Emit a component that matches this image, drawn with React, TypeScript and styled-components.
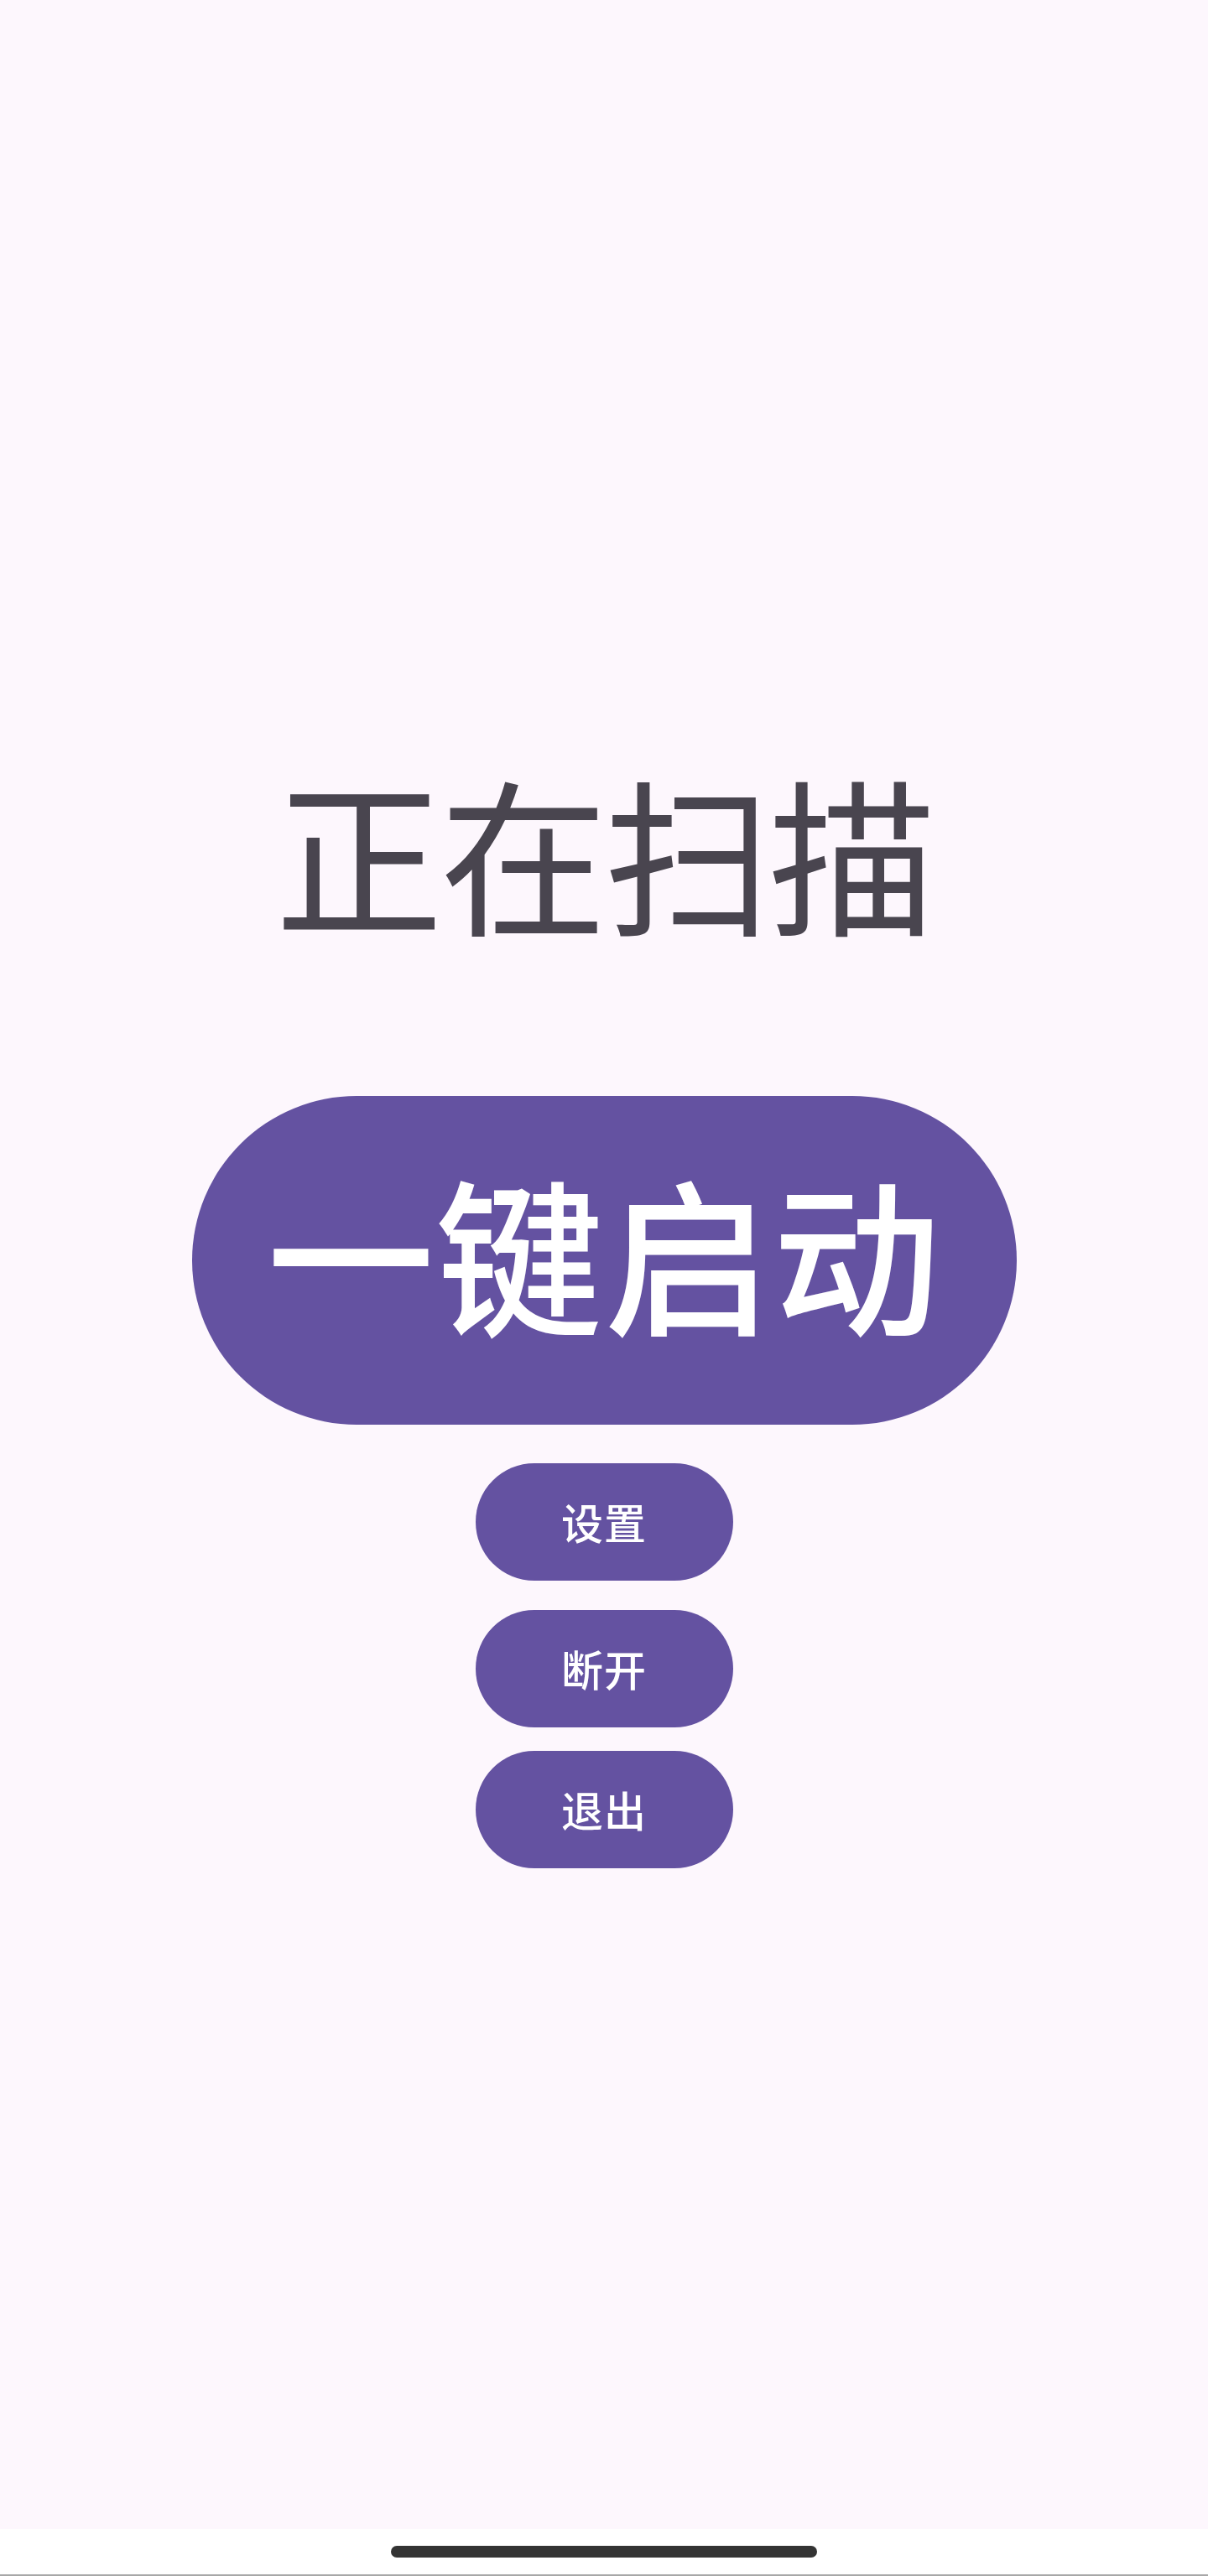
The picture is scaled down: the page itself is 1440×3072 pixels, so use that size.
import React from "react";
import styled, { createGlobalStyle } from "styled-components";

const GlobalStyle = createGlobalStyle`
  html, body {
    margin: 0;
    padding: 0;
    background: #ffffff;
  }
  body {
    font-family: "Noto Sans CJK SC", "Noto Sans", Roboto, sans-serif;
  }
`;

const Screen = styled.div`
  width: 1440px;
  height: 3072px;
  display: flex;
  flex-direction: column;
`;

const Main = styled.main`
  flex: 1;
  background: #fdf7fd;
  display: flex;
  flex-direction: column;
  align-items: center;
  padding-top: 914px;
  box-sizing: border-box;
`;

const Title = styled.h1`
  margin: 0 0 193px;
  font-size: 200px;
  line-height: 1;
  font-weight: 400;
  color: #49454f;
  letter-spacing: -4px;
`;

const PillButton = styled.button<{ $big?: boolean; $gap: number }>`
  display: flex;
  align-items: center;
  justify-content: center;
  border: none;
  outline: none;
  cursor: pointer;
  padding: 0 0 ${(p) => (p.$big ? 24 : 2)}px;
  margin: 0 0 ${(p) => p.$gap}px;
  background: #6452a1;
  color: #ffffff;
  font-family: inherit;
  font-weight: 500;
  width: ${(p) => (p.$big ? 983 : 307)}px;
  height: ${(p) => (p.$big ? 392 : 140)}px;
  border-radius: ${(p) => (p.$big ? 196 : 70)}px;
  font-size: ${(p) => (p.$big ? 200 : 50)}px;
  line-height: 1;
  letter-spacing: 1px;
`;

const NavBar = styled.div`
  height: 56px;
  background: #ffffff;
  border-bottom: 2px solid #a8a8a8;
  box-sizing: border-box;
  display: flex;
  align-items: center;
  justify-content: center;
`;

const Handle = styled.div`
  width: 508px;
  height: 14px;
  border-radius: 7px;
  background: #343434;
`;

export default function App() {
  return (
    <>
      <GlobalStyle />
      <Screen>
        <Main>
          <Title>正在扫描</Title>
          <PillButton $big $gap={46}>一键启动</PillButton>
          <PillButton $gap={35}>设置</PillButton>
          <PillButton $gap={28}>断开</PillButton>
          <PillButton $gap={0}>退出</PillButton>
        </Main>
        <NavBar>
          <Handle />
        </NavBar>
      </Screen>
    </>
  );
}
